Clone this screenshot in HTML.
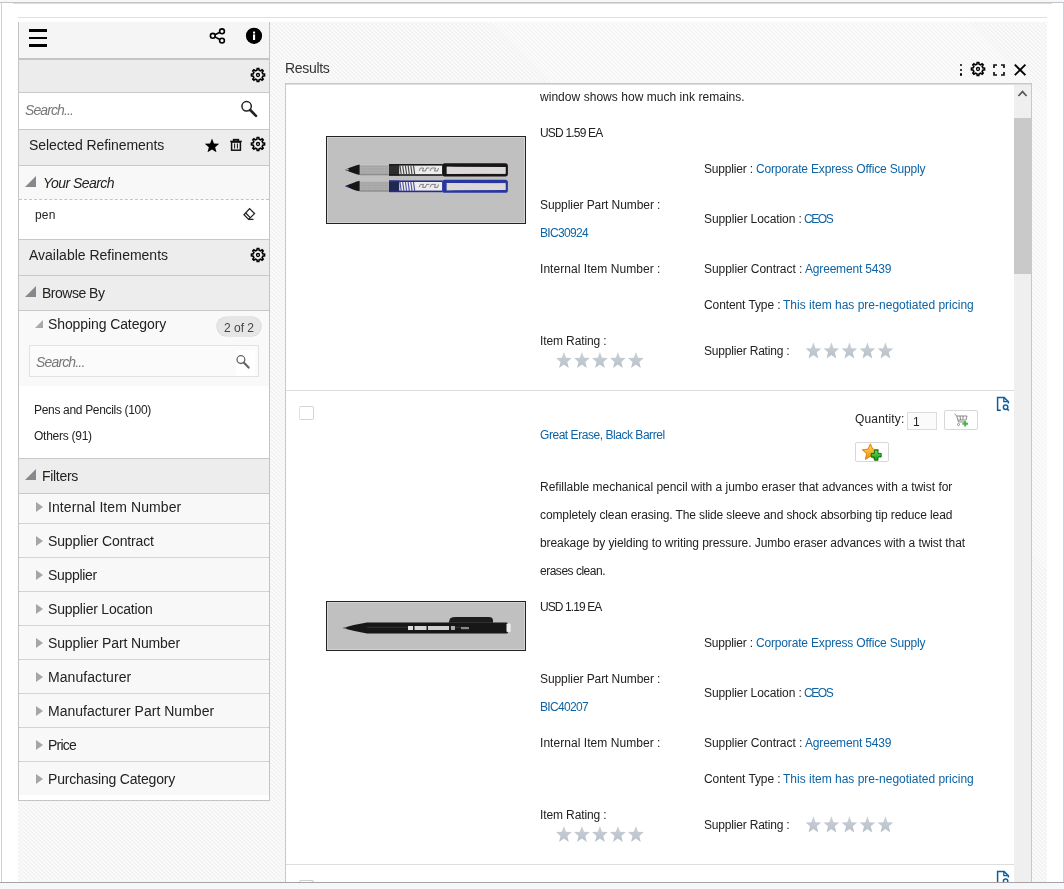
<!DOCTYPE html>
<html><head><meta charset="utf-8"><style>
html,body{margin:0;padding:0;}
body{width:1064px;height:889px;overflow:hidden;position:relative;font-family:"Liberation Sans", sans-serif;}
span{will-change:transform;}
</style></head><body>
<div style="position:absolute;left:0px;top:0px;width:1064px;height:889px;background:#f7f7f9;"></div>
<div style="position:absolute;left:0px;top:2px;width:1064px;height:1px;background:#c4c4c4;"></div>
<div style="position:absolute;left:0px;top:3px;width:1064px;height:879px;background:#ffffff;"></div>
<div style="position:absolute;left:13px;top:3px;width:1039px;height:1px;background:#d5dde5;"></div>
<div style="position:absolute;left:1px;top:3px;width:1px;height:879px;background:#c9d3dc;"></div>
<div style="position:absolute;left:1063px;top:3px;width:1px;height:879px;background:#c9d3dc;"></div>
<div style="position:absolute;left:0px;top:882px;width:1064px;height:1px;background:#a4a4a4;"></div>
<div style="position:absolute;left:18px;top:17px;width:1029px;height:1px;background:#d8e0e8;"></div>
<div style="position:absolute;left:18px;top:22px;width:1029px;height:860px;background:repeating-linear-gradient(45deg,#fafafa 0px,#fafafa 1.6px,#f3f3f3 1.6px,#f3f3f3 2.83px);"></div>
<div style="position:absolute;left:18px;top:22px;width:252px;height:779px;background:#c4c4c4;"></div>
<div style="position:absolute;left:19px;top:22px;width:250px;height:36px;background:#f5f5f5;"></div>
<div style="position:absolute;left:19px;top:58px;width:250px;height:2px;background:#c4c4c4;"></div>
<div style="position:absolute;left:19px;top:60px;width:250px;height:32px;background:#ececec;"></div>
<div style="position:absolute;left:19px;top:92px;width:250px;height:1px;background:#c8c8c8;"></div>
<div style="position:absolute;left:19px;top:93px;width:250px;height:36px;background:#ffffff;"></div>
<div style="position:absolute;left:19px;top:129px;width:250px;height:1px;background:#c8c8c8;"></div>
<div style="position:absolute;left:19px;top:130px;width:250px;height:35px;background:#ededed;"></div>
<div style="position:absolute;left:19px;top:165px;width:250px;height:1px;background:#c8c8c8;"></div>
<div style="position:absolute;left:19px;top:166px;width:250px;height:33px;background:#f8f8f8;"></div>
<div style="position:absolute;left:19px;top:199px;width:250px;height:1px;background:#ffffff;"></div>
<div style="position:absolute;left:19px;top:199px;width:250px;height:0;border-top:1px dashed #c4c4c4;"></div>
<div style="position:absolute;left:19px;top:200px;width:250px;height:39px;background:#ffffff;"></div>
<div style="position:absolute;left:19px;top:239px;width:250px;height:1px;background:#c8c8c8;"></div>
<div style="position:absolute;left:19px;top:240px;width:250px;height:35px;background:#ededed;"></div>
<div style="position:absolute;left:19px;top:275px;width:250px;height:1px;background:#c8c8c8;"></div>
<div style="position:absolute;left:19px;top:276px;width:250px;height:34px;background:#ededed;"></div>
<div style="position:absolute;left:19px;top:310px;width:250px;height:1px;background:#c8c8c8;"></div>
<div style="position:absolute;left:19px;top:311px;width:250px;height:75px;background:#f9f9f9;"></div>
<div style="position:absolute;left:19px;top:386px;width:250px;height:72px;background:#ffffff;"></div>
<div style="position:absolute;left:19px;top:458px;width:250px;height:1px;background:#c8c8c8;"></div>
<div style="position:absolute;left:19px;top:459px;width:250px;height:34px;background:#ededed;"></div>
<div style="position:absolute;left:19px;top:493px;width:250px;height:1px;background:#c8c8c8;"></div>
<div style="position:absolute;left:19px;top:494px;width:250px;height:29px;background:#f8f8f8;"></div>
<div style="position:absolute;left:20px;top:523px;width:248px;height:1px;background:#d4d4d4;"></div>
<div style="position:absolute;left:36px;top:502px;width:0;height:0;border-top:5px solid transparent;border-bottom:5px solid transparent;border-left:7px solid #a6a6a6;"></div>
<div style="position:absolute;left:19px;top:524px;width:250px;height:33px;background:#f8f8f8;"></div>
<div style="position:absolute;left:20px;top:557px;width:248px;height:1px;background:#d4d4d4;"></div>
<div style="position:absolute;left:36px;top:536px;width:0;height:0;border-top:5px solid transparent;border-bottom:5px solid transparent;border-left:7px solid #a6a6a6;"></div>
<div style="position:absolute;left:19px;top:558px;width:250px;height:33px;background:#f8f8f8;"></div>
<div style="position:absolute;left:20px;top:591px;width:248px;height:1px;background:#d4d4d4;"></div>
<div style="position:absolute;left:36px;top:570px;width:0;height:0;border-top:5px solid transparent;border-bottom:5px solid transparent;border-left:7px solid #a6a6a6;"></div>
<div style="position:absolute;left:19px;top:592px;width:250px;height:33px;background:#f8f8f8;"></div>
<div style="position:absolute;left:20px;top:625px;width:248px;height:1px;background:#d4d4d4;"></div>
<div style="position:absolute;left:36px;top:604px;width:0;height:0;border-top:5px solid transparent;border-bottom:5px solid transparent;border-left:7px solid #a6a6a6;"></div>
<div style="position:absolute;left:19px;top:626px;width:250px;height:33px;background:#f8f8f8;"></div>
<div style="position:absolute;left:20px;top:659px;width:248px;height:1px;background:#d4d4d4;"></div>
<div style="position:absolute;left:36px;top:638px;width:0;height:0;border-top:5px solid transparent;border-bottom:5px solid transparent;border-left:7px solid #a6a6a6;"></div>
<div style="position:absolute;left:19px;top:660px;width:250px;height:33px;background:#f8f8f8;"></div>
<div style="position:absolute;left:20px;top:693px;width:248px;height:1px;background:#d4d4d4;"></div>
<div style="position:absolute;left:36px;top:672px;width:0;height:0;border-top:5px solid transparent;border-bottom:5px solid transparent;border-left:7px solid #a6a6a6;"></div>
<div style="position:absolute;left:19px;top:694px;width:250px;height:33px;background:#f8f8f8;"></div>
<div style="position:absolute;left:20px;top:727px;width:248px;height:1px;background:#d4d4d4;"></div>
<div style="position:absolute;left:36px;top:706px;width:0;height:0;border-top:5px solid transparent;border-bottom:5px solid transparent;border-left:7px solid #a6a6a6;"></div>
<div style="position:absolute;left:19px;top:728px;width:250px;height:33px;background:#f8f8f8;"></div>
<div style="position:absolute;left:20px;top:761px;width:248px;height:1px;background:#d4d4d4;"></div>
<div style="position:absolute;left:36px;top:740px;width:0;height:0;border-top:5px solid transparent;border-bottom:5px solid transparent;border-left:7px solid #a6a6a6;"></div>
<div style="position:absolute;left:19px;top:762px;width:250px;height:33px;background:#f8f8f8;"></div>
<div style="position:absolute;left:36px;top:774px;width:0;height:0;border-top:5px solid transparent;border-bottom:5px solid transparent;border-left:7px solid #a6a6a6;"></div>
<div style="position:absolute;left:19px;top:795px;width:250px;height:5px;background:#ffffff;"></div>
<div style="position:absolute;left:29px;top:345px;width:228px;height:30px;border:1px solid #e2e2e2;background:#fbfbfb;"></div>
<div style="position:absolute;left:236px;top:350px;width:19px;height:26px;background:#ffffff;"></div>
<div style="position:absolute;left:217px;top:317px;width:44px;height:19px;border-radius:10px;background:#e6e6e6;box-shadow:0 0 0.5px 0.6px #d4d4d4;"></div>
<div style="position:absolute;left:25px;top:176px;width:0;height:0;border-left:11px solid transparent;border-bottom:11px solid #85898d;"></div>
<div style="position:absolute;left:25px;top:286px;width:0;height:0;border-left:11px solid transparent;border-bottom:11px solid #85898d;"></div>
<div style="position:absolute;left:25px;top:469px;width:0;height:0;border-left:11px solid transparent;border-bottom:11px solid #85898d;"></div>
<div style="position:absolute;left:35px;top:320px;width:0;height:0;border-left:8px solid transparent;border-bottom:8px solid #a9a9a9;"></div>
<div style="position:absolute;left:29px;top:29px;width:18px;height:3px;background:#000;"></div>
<div style="position:absolute;left:29px;top:37px;width:18px;height:2px;background:#000;"></div>
<div style="position:absolute;left:29px;top:44px;width:18px;height:3px;background:#000;"></div>
<svg style="position:absolute;left:205px;top:26px" width="24" height="20" viewBox="205 26 24 20"><g fill="none" stroke="#000" stroke-width="1.6"><circle cx="212.8" cy="35.8" r="2.4"/><circle cx="222" cy="31.3" r="2.4"/><circle cx="222" cy="40.6" r="2.4"/><line x1="214.9" y1="34.7" x2="219.9" y2="32.3"/><line x1="214.9" y1="36.9" x2="219.9" y2="39.5"/></g></svg>
<svg style="position:absolute;left:244px;top:26px" width="20" height="20" viewBox="244 26 20 20"><circle cx="254" cy="35.8" r="8.1" fill="#000"/><rect x="253" y="31.6" width="2.1" height="1.9" fill="#fff"/><rect x="253" y="34.4" width="2.1" height="5.6" fill="#fff"/></svg>
<svg style="position:absolute;left:247.50px;top:65.30px" width="20" height="20" viewBox="247.50 65.30 20 20"><path d="M256.72,68.75 L258.28,68.75 L258.61,70.53 L260.09,71.14 L261.59,70.12 L262.68,71.21 L261.66,72.71 L262.27,74.19 L264.05,74.52 L264.05,76.08 L262.27,76.41 L261.66,77.89 L262.68,79.39 L261.59,80.48 L260.09,79.46 L258.61,80.07 L258.28,81.85 L256.72,81.85 L256.39,80.07 L254.91,79.46 L253.41,80.48 L252.32,79.39 L253.34,77.89 L252.73,76.41 L250.95,76.08 L250.95,74.52 L252.73,74.19 L253.34,72.71 L252.32,71.21 L253.41,70.12 L254.91,71.14 L256.39,70.53 Z" fill="none" stroke="#000" stroke-width="1.6" stroke-linejoin="miter"/><circle cx="257.5" cy="75.3" r="1.5" fill="none" stroke="#000" stroke-width="1.3"/></svg>
<svg style="position:absolute;left:247.50px;top:134.30px" width="20" height="20" viewBox="247.50 134.30 20 20"><path d="M256.72,137.75 L258.28,137.75 L258.61,139.53 L260.09,140.14 L261.59,139.12 L262.68,140.21 L261.66,141.71 L262.27,143.19 L264.05,143.52 L264.05,145.08 L262.27,145.41 L261.66,146.89 L262.68,148.39 L261.59,149.48 L260.09,148.46 L258.61,149.07 L258.28,150.85 L256.72,150.85 L256.39,149.07 L254.91,148.46 L253.41,149.48 L252.32,148.39 L253.34,146.89 L252.73,145.41 L250.95,145.08 L250.95,143.52 L252.73,143.19 L253.34,141.71 L252.32,140.21 L253.41,139.12 L254.91,140.14 L256.39,139.53 Z" fill="none" stroke="#000" stroke-width="1.6" stroke-linejoin="miter"/><circle cx="257.5" cy="144.3" r="1.5" fill="none" stroke="#000" stroke-width="1.3"/></svg>
<svg style="position:absolute;left:247.50px;top:244.60px" width="20" height="20" viewBox="247.50 244.60 20 20"><path d="M256.72,248.05 L258.28,248.05 L258.61,249.83 L260.09,250.44 L261.59,249.42 L262.68,250.51 L261.66,252.01 L262.27,253.49 L264.05,253.82 L264.05,255.38 L262.27,255.71 L261.66,257.19 L262.68,258.69 L261.59,259.78 L260.09,258.76 L258.61,259.37 L258.28,261.15 L256.72,261.15 L256.39,259.37 L254.91,258.76 L253.41,259.78 L252.32,258.69 L253.34,257.19 L252.73,255.71 L250.95,255.38 L250.95,253.82 L252.73,253.49 L253.34,252.01 L252.32,250.51 L253.41,249.42 L254.91,250.44 L256.39,249.83 Z" fill="none" stroke="#000" stroke-width="1.6" stroke-linejoin="miter"/><circle cx="257.5" cy="254.6" r="1.5" fill="none" stroke="#000" stroke-width="1.3"/></svg>
<svg style="position:absolute;left:200px;top:134px" width="24" height="22" viewBox="200 134 24 22"><path d="M212.00,138.60 L213.94,143.53 L219.23,143.85 L215.14,147.22 L216.47,152.35 L212.00,149.50 L207.53,152.35 L208.86,147.22 L204.77,143.85 L210.06,143.53 Z" fill="#000"/></svg>
<svg style="position:absolute;left:228px;top:136px" width="16" height="18" viewBox="228 136 16 18"><g fill="none" stroke="#111" stroke-width="1.5"><rect x="231.6" y="142" width="8.8" height="8.2"/><line x1="230.2" y1="141.4" x2="241.8" y2="141.4"/><rect x="233.6" y="139.6" width="4.8" height="1.8"/><line x1="234.6" y1="143.5" x2="234.6" y2="148.5" stroke-width="1"/><line x1="237.4" y1="143.5" x2="237.4" y2="148.5" stroke-width="1"/></g></svg>
<svg style="position:absolute;left:236px;top:96px" width="24" height="24" viewBox="236 96 24 24"><circle cx="246.6" cy="106.3" r="4.7" fill="none" stroke="#222" stroke-width="1.5"/><line x1="250.2" y1="110" x2="256" y2="115.8" stroke="#222" stroke-width="2.6" stroke-linecap="round"/></svg>
<svg style="position:absolute;left:234px;top:352px" width="18" height="20" viewBox="234 352 18 20"><circle cx="240.9" cy="359.6" r="3.9" fill="none" stroke="#666" stroke-width="1.3"/><line x1="243.8" y1="362.6" x2="248.6" y2="367.6" stroke="#666" stroke-width="2.2" stroke-linecap="round"/></svg>
<svg style="position:absolute;left:240px;top:205px" width="18" height="18" viewBox="240 205 18 18"><g fill="none" stroke="#222" stroke-width="1.3"><path d="M249.6,208.6 L254.5,213.6 L248.6,219.4 L244,214.8 Z"/><line x1="245.8" y1="213.0" x2="250.2" y2="217.6"/><line x1="248.6" y1="219.4" x2="253.5" y2="219.4"/></g></svg>
<div style="position:absolute;left:959.7px;top:63.7px;width:2.6px;height:2.6px;border-radius:50%;background:#000"></div>
<div style="position:absolute;left:959.7px;top:68.5px;width:2.6px;height:2.6px;border-radius:50%;background:#000"></div>
<div style="position:absolute;left:959.7px;top:73.3px;width:2.6px;height:2.6px;border-radius:50%;background:#000"></div>
<svg style="position:absolute;left:968.40px;top:59.40px" width="20" height="20" viewBox="968.40 59.40 20 20"><path d="M977.62,62.85 L979.18,62.85 L979.51,64.63 L980.99,65.24 L982.49,64.22 L983.58,65.31 L982.56,66.81 L983.17,68.29 L984.95,68.62 L984.95,70.18 L983.17,70.51 L982.56,71.99 L983.58,73.49 L982.49,74.58 L980.99,73.56 L979.51,74.17 L979.18,75.95 L977.62,75.95 L977.29,74.17 L975.81,73.56 L974.31,74.58 L973.22,73.49 L974.24,71.99 L973.63,70.51 L971.85,70.18 L971.85,68.62 L973.63,68.29 L974.24,66.81 L973.22,65.31 L974.31,64.22 L975.81,65.24 L977.29,64.63 Z" fill="none" stroke="#000" stroke-width="1.6" stroke-linejoin="miter"/><circle cx="978.4" cy="69.4" r="1.5" fill="none" stroke="#000" stroke-width="1.3"/></svg>
<svg style="position:absolute;left:990px;top:61px" width="18" height="18" viewBox="990 61 18 18"><g fill="none" stroke="#111" stroke-width="1.7"><path d="M994,68 V65 H997"/><path d="M1001,65 H1004 V68"/><path d="M1004,72 V75 H1001"/><path d="M997,75 H994 V72"/></g></svg>
<svg style="position:absolute;left:1011px;top:61px" width="18" height="18" viewBox="1011 61 18 18"><g stroke="#000" stroke-width="1.9"><line x1="1014.8" y1="64.6" x2="1025.4" y2="75.2"/><line x1="1025.4" y1="64.6" x2="1014.8" y2="75.2"/></g></svg>
<div style="position:absolute;left:285px;top:83px;width:747px;height:799px;background:#c8c8c8;"></div>
<div style="position:absolute;left:286px;top:84px;width:745px;height:798px;background:#dedede;"></div>
<div style="position:absolute;left:286px;top:85px;width:728px;height:797px;background:#ffffff;"></div>
<div style="position:absolute;left:1014px;top:85px;width:17px;height:797px;background:#efefef;"></div>
<div style="position:absolute;left:1014px;top:118px;width:17px;height:156px;background:#c9c9c9;"></div>
<svg style="position:absolute;left:1014px;top:86px" width="17" height="14" viewBox="1014 86 17 14"><path d="M1018.4,96 L1022.5,91.6 L1026.6,96" fill="none" stroke="#5a5a5a" stroke-width="1.8"/></svg>
<div style="position:absolute;left:286px;top:390px;width:728px;height:1px;background:#dddddd;"></div>
<div style="position:absolute;left:299px;top:406px;width:13px;height:12px;border:1px solid #d2d4d6;border-left-color:#e2e2e2;border-radius:2px;background:#fff"></div>
<svg style="position:absolute;left:994px;top:394px" width="18" height="20" viewBox="994 394 18 20"><g fill="none" stroke="#0b5f9f" stroke-width="1.5"><path d="M1000.8,410.2 H997.6 V397.6 H1004.2 L1008.4,401.8 V403.4"/><path d="M1003.8,397.8 V401.6 H1007.8" stroke-width="1.3"/><circle cx="1005.6" cy="407.3" r="2.2"/><line x1="1007.2" y1="409" x2="1008.8" y2="410.6"/></g></svg>
<div style="position:absolute;left:286px;top:864px;width:728px;height:1px;background:#dddddd;"></div>
<div style="position:absolute;left:299px;top:880px;width:13px;height:12px;border:1px solid #d2d4d6;border-left-color:#e2e2e2;border-radius:2px;background:#fff"></div>
<svg style="position:absolute;left:994px;top:868px" width="18" height="20" viewBox="994 868 18 20"><g fill="none" stroke="#0b5f9f" stroke-width="1.5"><path d="M1000.8,884.2 H997.6 V871.6 H1004.2 L1008.4,875.8 V877.4"/><path d="M1003.8,871.8 V875.6 H1007.8" stroke-width="1.3"/><circle cx="1005.6" cy="881.3" r="2.2"/><line x1="1007.2" y1="883" x2="1008.8" y2="884.6"/></g></svg>
<div style="position:absolute;left:286px;top:-84px;width:728px;height:1px;background:#dddddd;"></div>
<div style="position:absolute;left:299px;top:-68px;width:13px;height:12px;border:1px solid #d2d4d6;border-left-color:#e2e2e2;border-radius:2px;background:#fff"></div>
<svg style="position:absolute;left:994px;top:-80px" width="18" height="20" viewBox="994 -80 18 20"><g fill="none" stroke="#0b5f9f" stroke-width="1.5"><path d="M1000.8,-63.80000000000001 H997.6 V-76.39999999999998 H1004.2 L1008.4,-72.19999999999999 V-70.60000000000002"/><path d="M1003.8,-76.19999999999999 V-72.39999999999998 H1007.8" stroke-width="1.3"/><circle cx="1005.6" cy="-66.69999999999999" r="2.2"/><line x1="1007.2" y1="-65" x2="1008.8" y2="-63.39999999999998"/></g></svg>
<svg style="position:absolute;left:550px;top:336px" width="360" height="40" viewBox="550 336 360 40"><defs><linearGradient id="sg0" x1="0" y1="0" x2="0" y2="1"><stop offset="0" stop-color="#ccd1d7"/><stop offset="1" stop-color="#b8c0c9"/></linearGradient></defs><path d="M563.90,351.90 L565.98,357.73 L571.77,358.05 L567.26,361.97 L568.77,368.00 L563.90,364.60 L559.03,368.00 L560.54,361.97 L556.03,358.05 L561.82,357.73 Z" fill="url(#sg0)"/><path d="M581.90,351.90 L583.98,357.73 L589.77,358.05 L585.26,361.97 L586.77,368.00 L581.90,364.60 L577.03,368.00 L578.54,361.97 L574.03,358.05 L579.82,357.73 Z" fill="url(#sg0)"/><path d="M599.90,351.90 L601.98,357.73 L607.77,358.05 L603.26,361.97 L604.77,368.00 L599.90,364.60 L595.03,368.00 L596.54,361.97 L592.03,358.05 L597.82,357.73 Z" fill="url(#sg0)"/><path d="M617.90,351.90 L619.98,357.73 L625.77,358.05 L621.26,361.97 L622.77,368.00 L617.90,364.60 L613.03,368.00 L614.54,361.97 L610.03,358.05 L615.82,357.73 Z" fill="url(#sg0)"/><path d="M635.90,351.90 L637.98,357.73 L643.77,358.05 L639.26,361.97 L640.77,368.00 L635.90,364.60 L631.03,368.00 L632.54,361.97 L628.03,358.05 L633.82,357.73 Z" fill="url(#sg0)"/><path d="M813.40,342.30 L815.48,348.13 L821.27,348.45 L816.76,352.37 L818.27,358.40 L813.40,355.00 L808.53,358.40 L810.04,352.37 L805.53,348.45 L811.32,348.13 Z" fill="url(#sg0)"/><path d="M831.40,342.30 L833.48,348.13 L839.27,348.45 L834.76,352.37 L836.27,358.40 L831.40,355.00 L826.53,358.40 L828.04,352.37 L823.53,348.45 L829.32,348.13 Z" fill="url(#sg0)"/><path d="M849.40,342.30 L851.48,348.13 L857.27,348.45 L852.76,352.37 L854.27,358.40 L849.40,355.00 L844.53,358.40 L846.04,352.37 L841.53,348.45 L847.32,348.13 Z" fill="url(#sg0)"/><path d="M867.40,342.30 L869.48,348.13 L875.27,348.45 L870.76,352.37 L872.27,358.40 L867.40,355.00 L862.53,358.40 L864.04,352.37 L859.53,348.45 L865.32,348.13 Z" fill="url(#sg0)"/><path d="M885.40,342.30 L887.48,348.13 L893.27,348.45 L888.76,352.37 L890.27,358.40 L885.40,355.00 L880.53,358.40 L882.04,352.37 L877.53,348.45 L883.32,348.13 Z" fill="url(#sg0)"/></svg>
<svg style="position:absolute;left:550px;top:810px" width="360" height="40" viewBox="550 810 360 40"><defs><linearGradient id="sg474" x1="0" y1="0" x2="0" y2="1"><stop offset="0" stop-color="#ccd1d7"/><stop offset="1" stop-color="#b8c0c9"/></linearGradient></defs><path d="M563.90,825.90 L565.98,831.73 L571.77,832.05 L567.26,835.97 L568.77,842.00 L563.90,838.60 L559.03,842.00 L560.54,835.97 L556.03,832.05 L561.82,831.73 Z" fill="url(#sg474)"/><path d="M581.90,825.90 L583.98,831.73 L589.77,832.05 L585.26,835.97 L586.77,842.00 L581.90,838.60 L577.03,842.00 L578.54,835.97 L574.03,832.05 L579.82,831.73 Z" fill="url(#sg474)"/><path d="M599.90,825.90 L601.98,831.73 L607.77,832.05 L603.26,835.97 L604.77,842.00 L599.90,838.60 L595.03,842.00 L596.54,835.97 L592.03,832.05 L597.82,831.73 Z" fill="url(#sg474)"/><path d="M617.90,825.90 L619.98,831.73 L625.77,832.05 L621.26,835.97 L622.77,842.00 L617.90,838.60 L613.03,842.00 L614.54,835.97 L610.03,832.05 L615.82,831.73 Z" fill="url(#sg474)"/><path d="M635.90,825.90 L637.98,831.73 L643.77,832.05 L639.26,835.97 L640.77,842.00 L635.90,838.60 L631.03,842.00 L632.54,835.97 L628.03,832.05 L633.82,831.73 Z" fill="url(#sg474)"/><path d="M813.40,816.30 L815.48,822.13 L821.27,822.45 L816.76,826.37 L818.27,832.40 L813.40,829.00 L808.53,832.40 L810.04,826.37 L805.53,822.45 L811.32,822.13 Z" fill="url(#sg474)"/><path d="M831.40,816.30 L833.48,822.13 L839.27,822.45 L834.76,826.37 L836.27,832.40 L831.40,829.00 L826.53,832.40 L828.04,826.37 L823.53,822.45 L829.32,822.13 Z" fill="url(#sg474)"/><path d="M849.40,816.30 L851.48,822.13 L857.27,822.45 L852.76,826.37 L854.27,832.40 L849.40,829.00 L844.53,832.40 L846.04,826.37 L841.53,822.45 L847.32,822.13 Z" fill="url(#sg474)"/><path d="M867.40,816.30 L869.48,822.13 L875.27,822.45 L870.76,826.37 L872.27,832.40 L867.40,829.00 L862.53,832.40 L864.04,826.37 L859.53,822.45 L865.32,822.13 Z" fill="url(#sg474)"/><path d="M885.40,816.30 L887.48,822.13 L893.27,822.45 L888.76,826.37 L890.27,832.40 L885.40,829.00 L880.53,832.40 L882.04,826.37 L877.53,822.45 L883.32,822.13 Z" fill="url(#sg474)"/></svg>
<svg style="position:absolute;left:326px;top:136px" width="200" height="88" viewBox="0 0 200 88">
<rect x="0.5" y="0.5" width="199" height="87" fill="#c0c0c0" stroke="#222" stroke-width="1"/>
<rect x="1.5" y="1.5" width="197" height="85" fill="none" stroke="#d4d4d4" stroke-width="1"/>
<g transform="translate(0,0)"><path d="M19.2,33.7 Q24,31.6 27,30.6 Q31,29 33.8,28.4 L33.8,38.9 Q31,38.4 27,37 Q24,35.9 19.2,33.9 Z" fill="#161616"/><path d="M19,33.8 L22.5,33 L22.5,34.6 Z" fill="#ddd"/><rect x="33.8" y="27.9" width="29.2" height="11.3" fill="#acacac"/><rect x="33.8" y="27.9" width="29.2" height="1.3" fill="#c6c6c6"/><rect x="33.8" y="37.8" width="29.2" height="1.4" fill="#8e8e8e"/><line x1="35" y1="30.5" x2="62" y2="30.5" stroke="#9a9a9a" stroke-width="0.7" stroke-dasharray="1.2 1.2"/><line x1="35" y1="33" x2="62" y2="33" stroke="#9a9a9a" stroke-width="0.7" stroke-dasharray="1.2 1.2"/><line x1="35" y1="35.5" x2="62" y2="35.5" stroke="#9a9a9a" stroke-width="0.7" stroke-dasharray="1.2 1.2"/><rect x="63" y="28.2" width="53.5" height="11.2" fill="#ededed"/><rect x="63" y="28.2" width="10.2" height="11.2" fill="#2e2e2e"/><rect x="63" y="28" width="53.5" height="1.6" fill="#1a1a1a"/><rect x="63" y="38.2" width="53.5" height="1.6" fill="#1a1a1a"/><path d="M74.0,29.6 L75.2,38.2" stroke="#1a1a1a" stroke-width="1.1" opacity="0.8"/><path d="M76.7,29.6 L77.9,38.2" stroke="#1a1a1a" stroke-width="1.1" opacity="0.8"/><path d="M79.4,29.6 L80.6,38.2" stroke="#1a1a1a" stroke-width="1.1" opacity="0.8"/><path d="M82.1,29.6 L83.3,38.2" stroke="#1a1a1a" stroke-width="1.1" opacity="0.8"/><path d="M84.8,29.6 L86.0,38.2" stroke="#1a1a1a" stroke-width="1.1" opacity="0.8"/><path d="M87.5,29.6 L88.7,38.2" stroke="#1a1a1a" stroke-width="1.1" opacity="0.8"/><path d="M93,35 l1.5,-3 h3 l-1,3 h3 l1,-3 h3 M104,35 l1.5,-3 h4 l-1,3 h3 l1,-3" fill="none" stroke="#444" stroke-width="0.8" opacity="0.8"/><rect x="116.1" y="27.3" width="65.8" height="13.1" rx="2.6" fill="#161616"/><path d="M120.8,30.7 L179.5,30.9 L179.5,37.7 L120.8,37.9 Q150,36.4 120.8,37.9 Z" fill="#dcd8d8"/><path d="M120.8,30.7 Q150,32 179.5,30.9 L179.5,37.7 Q150,36.6 120.8,37.9 Z" fill="#dcd8d8"/></g>
<g transform="translate(0,16.4)"><path d="M19.2,33.7 Q24,31.6 27,30.6 Q31,29 33.8,28.4 L33.8,38.9 Q31,38.4 27,37 Q24,35.9 19.2,33.9 Z" fill="#161616"/><path d="M19,33.8 L22.5,33 L22.5,34.6 Z" fill="#2a3ab0"/><rect x="33.8" y="27.9" width="29.2" height="11.3" fill="#acacac"/><rect x="33.8" y="27.9" width="29.2" height="1.3" fill="#c6c6c6"/><rect x="33.8" y="37.8" width="29.2" height="1.4" fill="#8e8e8e"/><line x1="35" y1="30.5" x2="62" y2="30.5" stroke="#9a9a9a" stroke-width="0.7" stroke-dasharray="1.2 1.2"/><line x1="35" y1="33" x2="62" y2="33" stroke="#9a9a9a" stroke-width="0.7" stroke-dasharray="1.2 1.2"/><line x1="35" y1="35.5" x2="62" y2="35.5" stroke="#9a9a9a" stroke-width="0.7" stroke-dasharray="1.2 1.2"/><rect x="63" y="28.2" width="53.5" height="11.2" fill="#ededed"/><rect x="63" y="28.2" width="10.2" height="11.2" fill="#1e2850"/><rect x="63" y="28" width="53.5" height="1.6" fill="#2a2a8c"/><rect x="63" y="38.2" width="53.5" height="1.6" fill="#2a2a8c"/><path d="M74.0,29.6 L75.2,38.2" stroke="#2a2a8c" stroke-width="1.1" opacity="0.8"/><path d="M76.7,29.6 L77.9,38.2" stroke="#2a2a8c" stroke-width="1.1" opacity="0.8"/><path d="M79.4,29.6 L80.6,38.2" stroke="#2a2a8c" stroke-width="1.1" opacity="0.8"/><path d="M82.1,29.6 L83.3,38.2" stroke="#2a2a8c" stroke-width="1.1" opacity="0.8"/><path d="M84.8,29.6 L86.0,38.2" stroke="#2a2a8c" stroke-width="1.1" opacity="0.8"/><path d="M87.5,29.6 L88.7,38.2" stroke="#2a2a8c" stroke-width="1.1" opacity="0.8"/><path d="M93,35 l1.5,-3 h3 l-1,3 h3 l1,-3 h3 M104,35 l1.5,-3 h4 l-1,3 h3 l1,-3" fill="none" stroke="#444" stroke-width="0.8" opacity="0.8"/><rect x="116.1" y="27.3" width="65.8" height="13.1" rx="2.6" fill="#2a36a0"/><path d="M120.8,30.7 L179.5,30.9 L179.5,37.7 L120.8,37.9 Q150,36.4 120.8,37.9 Z" fill="#dcd8d8"/><path d="M120.8,30.7 Q150,32 179.5,30.9 L179.5,37.7 Q150,36.6 120.8,37.9 Z" fill="#dcd8d8"/></g>
</svg>
<svg style="position:absolute;left:326px;top:601px" width="200" height="50" viewBox="0 0 200 50">
<rect x="0.5" y="0.5" width="199" height="49" fill="#c0c0c0" stroke="#222" stroke-width="1"/>
<rect x="1.5" y="1.5" width="197" height="47" fill="none" stroke="#d4d4d4" stroke-width="1"/>
<path d="M16,26.9 L20.5,26.2 L20.5,27.7 Z" fill="#333"/>
<path d="M20.3,25.9 Q30,23.5 41,21.6 L180.5,21.6 Q182,21.6 182,23.5 L182,31 Q182,32.6 180.5,32.6 L41,32.6 Q30,30.6 20.3,28 Z" fill="#171717"/>
<rect x="41" y="25.8" width="100" height="0.9" fill="#3a3a3a"/>
<path d="M122.7,21.7 L124,17.4 Q126,16 130,16 L163,16 Q166.5,16.2 167,19 L167,21.7 Z" fill="#1c1c1c"/>
<rect x="180.5" y="22.6" width="4.2" height="8.4" rx="1" fill="#ececec"/>
<rect x="82" y="25" width="5" height="4" fill="#e0e0e0"/>
<rect x="88.5" y="25" width="12" height="4" fill="#d6d6d6"/>
<rect x="102" y="25" width="21" height="4" fill="#d0d0d0"/>
<rect x="125" y="25" width="4" height="4" fill="#aaa"/>
<rect x="135" y="26" width="8" height="2.2" fill="#888"/>
</svg>
<div style="position:absolute;left:907px;top:412px;width:28px;height:16px;border:1px solid #dcdcdc;background:#fbfbfb"></div>
<div style="position:absolute;left:944px;top:410px;width:32px;height:18px;border:1px solid #d8d8d8;border-radius:2px;background:#fff"></div>
<svg style="position:absolute;left:950px;top:411px" width="22" height="16" viewBox="950 411 22 16"><g fill="none" stroke="#888" stroke-width="1"><path d="M954.5,414 L956.5,415.5 L958.5,422 L965,422"/><path d="M957,416 L967,416 L966,420 L958,420"/><line x1="960" y1="416" x2="960.6" y2="420"/><line x1="963" y1="416" x2="963" y2="420"/></g><circle cx="958.5" cy="424.5" r="1" fill="none" stroke="#777" stroke-width="0.8"/><path d="M964.2,421 h2 v1.8 h1.8 v2 h-1.8 v1.8 h-2 v-1.8 h-1.8 v-2 h1.8 Z" fill="#46b846"/></svg>
<div style="position:absolute;left:855px;top:442px;width:32px;height:18px;border:1px solid #d8d8d8;border-radius:2px;background:#fff"></div>
<svg style="position:absolute;left:858px;top:440px" width="26" height="24" viewBox="858 440 26 24"><defs><linearGradient id="og" x1="0" y1="0" x2="0" y2="1"><stop offset="0" stop-color="#ffd84a"/><stop offset="1" stop-color="#f09010"/></linearGradient><linearGradient id="gg" x1="0" y1="0" x2="0" y2="1"><stop offset="0" stop-color="#5ee05e"/><stop offset="1" stop-color="#10a010"/></linearGradient></defs><path d="M870.40,443.80 L872.75,449.16 L878.58,449.74 L874.20,453.64 L875.45,459.36 L870.40,456.40 L865.35,459.36 L866.60,453.64 L862.22,449.74 L868.05,449.16 Z" fill="url(#og)" stroke="#d87a08" stroke-width="0.9" stroke-linejoin="round"/><path d="M874.4,450.2 h3.6 v3.2 h3.2 v3.6 h-3.2 v3.2 h-3.6 v-3.2 h-3.2 v-3.6 h3.2 Z" fill="url(#gg)" stroke="#0a600a" stroke-width="0.9" stroke-linejoin="round"/></svg>
<div style="position:absolute;left:299px;top:880px;width:14px;height:2px;overflow:hidden"><div style="width:12px;height:12px;border:1px solid #cfcfcf;border-radius:2px;background:#fff"></div></div>
<div style="position:absolute;left:0px;top:882px;width:1064px;height:1px;background:#a4a4a4;"></div>
<div style="position:absolute;left:0px;top:883px;width:1064px;height:6px;background:#f7f7f9;"></div>
<span id="f0" style="position:absolute;left:48px;top:500px;font-size:14px;line-height:14px;color:#222222;font-style:normal;white-space:nowrap;letter-spacing:0.089px;">Internal Item Number</span>
<span id="f1" style="position:absolute;left:48px;top:534px;font-size:14px;line-height:14px;color:#222222;font-style:normal;white-space:nowrap;letter-spacing:-0.136px;">Supplier Contract</span>
<span id="f2" style="position:absolute;left:48px;top:568px;font-size:14px;line-height:14px;color:#222222;font-style:normal;white-space:nowrap;letter-spacing:-0.311px;">Supplier</span>
<span id="f3" style="position:absolute;left:48px;top:602px;font-size:14px;line-height:14px;color:#222222;font-style:normal;white-space:nowrap;letter-spacing:-0.212px;">Supplier Location</span>
<span id="f4" style="position:absolute;left:48px;top:636px;font-size:14px;line-height:14px;color:#222222;font-style:normal;white-space:nowrap;letter-spacing:-0.133px;">Supplier Part Number</span>
<span id="f5" style="position:absolute;left:48px;top:670px;font-size:14px;line-height:14px;color:#222222;font-style:normal;white-space:nowrap;letter-spacing:0.065px;">Manufacturer</span>
<span id="f6" style="position:absolute;left:48px;top:704px;font-size:14px;line-height:14px;color:#222222;font-style:normal;white-space:nowrap;letter-spacing:0.016px;">Manufacturer Part Number</span>
<span id="f7" style="position:absolute;left:48px;top:738px;font-size:14px;line-height:14px;color:#222222;font-style:normal;white-space:nowrap;letter-spacing:-0.752px;">Price</span>
<span id="f8" style="position:absolute;left:48px;top:772px;font-size:14px;line-height:14px;color:#222222;font-style:normal;white-space:nowrap;letter-spacing:-0.192px;">Purchasing Category</span>
<span id="srch1" style="position:absolute;left:25px;top:103px;font-size:14px;line-height:14px;color:#777777;font-style:italic;white-space:nowrap;letter-spacing:-0.891px;">Search...</span>
<span id="selref" style="position:absolute;left:29px;top:138px;font-size:14px;line-height:14px;color:#222222;font-style:normal;white-space:nowrap;letter-spacing:-0.093px;">Selected Refinements</span>
<span id="yoursearch" style="position:absolute;left:43px;top:176px;font-size:14px;line-height:14px;color:#222222;font-style:italic;white-space:nowrap;letter-spacing:-0.546px;">Your Search</span>
<span id="pen" style="position:absolute;left:35px;top:209px;font-size:12px;line-height:12px;color:#222222;font-style:normal;white-space:nowrap;letter-spacing:0.184px;">pen</span>
<span id="avail" style="position:absolute;left:29px;top:248px;font-size:14px;line-height:14px;color:#222222;font-style:normal;white-space:nowrap;">Available Refinements</span>
<span id="browse" style="position:absolute;left:42px;top:286px;font-size:14px;line-height:14px;color:#222222;font-style:normal;white-space:nowrap;letter-spacing:-0.503px;">Browse By</span>
<span id="shopcat" style="position:absolute;left:48px;top:317px;font-size:14px;line-height:14px;color:#222222;font-style:normal;white-space:nowrap;letter-spacing:-0.098px;">Shopping Category</span>
<span id="badge" style="position:absolute;left:224px;top:322px;font-size:12px;line-height:12px;color:#444444;font-style:normal;white-space:nowrap;">2 of 2</span>
<span id="srch2" style="position:absolute;left:36px;top:355px;font-size:14px;line-height:14px;color:#777777;font-style:italic;white-space:nowrap;letter-spacing:-0.841px;">Search...</span>
<span id="pens" style="position:absolute;left:34px;top:404px;font-size:12px;line-height:12px;color:#222222;font-style:normal;white-space:nowrap;letter-spacing:-0.323px;">Pens and Pencils (100)</span>
<span id="others" style="position:absolute;left:34px;top:430px;font-size:12px;line-height:12px;color:#222222;font-style:normal;white-space:nowrap;letter-spacing:-0.259px;">Others (91)</span>
<span id="filters" style="position:absolute;left:42px;top:469px;font-size:14px;line-height:14px;color:#222222;font-style:normal;white-space:nowrap;letter-spacing:-0.304px;">Filters</span>
<span id="results" style="position:absolute;left:285px;top:61px;font-size:14px;line-height:14px;color:#333333;font-style:normal;white-space:nowrap;letter-spacing:-0.315px;">Results</span>
<div style="position:absolute;left:286px;top:85px;width:728px;height:797px;overflow:hidden;"><div style="position:absolute;left:-286px;top:-85px;width:1064px;height:889px;"><span id="a_desc4" style="position:absolute;left:540px;top:91px;font-size:12px;line-height:12px;color:#222222;font-style:normal;white-space:nowrap;letter-spacing:0.039px;">window shows how much ink remains.</span>
<span id="a_usd" style="position:absolute;left:540px;top:127px;font-size:12px;line-height:12px;color:#222222;font-style:normal;white-space:nowrap;letter-spacing:-0.817px;">USD 1.59 EA</span>
<span id="a_bic" style="position:absolute;left:540px;top:227px;font-size:12px;line-height:12px;color:#0d63a3;font-style:normal;white-space:nowrap;letter-spacing:-0.682px;">BIC30924</span>
<span id="a_sup" style="position:absolute;left:704px;top:163px;font-size:12px;line-height:12px;color:#222222;font-style:normal;white-space:nowrap;letter-spacing:-0.167px;">Supplier :</span>
<span id="a_supv" style="position:absolute;left:756px;top:163px;font-size:12px;line-height:12px;color:#0d63a3;font-style:normal;white-space:nowrap;letter-spacing:-0.168px;">Corporate Express Office Supply</span>
<span id="a_spn" style="position:absolute;left:540px;top:199px;font-size:12px;line-height:12px;color:#222222;font-style:normal;white-space:nowrap;letter-spacing:-0.079px;">Supplier Part Number :</span>
<span id="a_sloc" style="position:absolute;left:704px;top:213px;font-size:12px;line-height:12px;color:#222222;font-style:normal;white-space:nowrap;letter-spacing:-0.089px;">Supplier Location :</span>
<span id="a_slocv" style="position:absolute;left:804px;top:213px;font-size:12px;line-height:12px;color:#0d63a3;font-style:normal;white-space:nowrap;letter-spacing:-1.405px;">CEOS</span>
<span id="a_iin" style="position:absolute;left:540px;top:263px;font-size:12px;line-height:12px;color:#222222;font-style:normal;white-space:nowrap;letter-spacing:0.048px;">Internal Item Number :</span>
<span id="a_scon" style="position:absolute;left:704px;top:263px;font-size:12px;line-height:12px;color:#222222;font-style:normal;white-space:nowrap;letter-spacing:-0.061px;">Supplier Contract :</span>
<span id="a_sconv" style="position:absolute;left:805px;top:263px;font-size:12px;line-height:12px;color:#0d63a3;font-style:normal;white-space:nowrap;letter-spacing:-0.180px;">Agreement 5439</span>
<span id="a_ctype" style="position:absolute;left:704px;top:299px;font-size:12px;line-height:12px;color:#222222;font-style:normal;white-space:nowrap;letter-spacing:-0.096px;">Content Type :</span>
<span id="a_ctypev" style="position:absolute;left:783px;top:299px;font-size:12px;line-height:12px;color:#0d63a3;font-style:normal;white-space:nowrap;">This item has pre-negotiated pricing</span>
<span id="a_irat" style="position:absolute;left:540px;top:335px;font-size:12px;line-height:12px;color:#222222;font-style:normal;white-space:nowrap;letter-spacing:-0.111px;">Item Rating :</span>
<span id="a_srat" style="position:absolute;left:704px;top:345px;font-size:12px;line-height:12px;color:#222222;font-style:normal;white-space:nowrap;letter-spacing:-0.189px;">Supplier Rating :</span>
<span id="b_title" style="position:absolute;left:540px;top:429px;font-size:12px;line-height:12px;color:#0d63a3;font-style:normal;white-space:nowrap;letter-spacing:-0.457px;">Great Erase, Black Barrel</span>
<span id="b_qty" style="position:absolute;left:855px;top:413px;font-size:12px;line-height:12px;color:#222222;font-style:normal;white-space:nowrap;letter-spacing:0.159px;">Quantity:</span>
<span id="b_d1" style="position:absolute;left:540px;top:481px;font-size:12px;line-height:12px;color:#222222;font-style:normal;white-space:nowrap;letter-spacing:-0.015px;">Refillable mechanical pencil with a jumbo eraser that advances with a twist for</span>
<span id="b_d2" style="position:absolute;left:540px;top:509px;font-size:12px;line-height:12px;color:#222222;font-style:normal;white-space:nowrap;letter-spacing:-0.117px;">completely clean erasing. The slide sleeve and shock absorbing tip reduce lead</span>
<span id="b_d3" style="position:absolute;left:540px;top:537px;font-size:12px;line-height:12px;color:#222222;font-style:normal;white-space:nowrap;letter-spacing:-0.081px;">breakage by yielding to writing pressure. Jumbo eraser advances with a twist that</span>
<span id="b_d4" style="position:absolute;left:540px;top:565px;font-size:12px;line-height:12px;color:#222222;font-style:normal;white-space:nowrap;letter-spacing:-0.490px;">erases clean.</span>
<span id="b_usd" style="position:absolute;left:540px;top:601px;font-size:12px;line-height:12px;color:#222222;font-style:normal;white-space:nowrap;letter-spacing:-0.908px;">USD 1.19 EA</span>
<span id="b_bic" style="position:absolute;left:540px;top:701px;font-size:12px;line-height:12px;color:#0d63a3;font-style:normal;white-space:nowrap;letter-spacing:-0.682px;">BIC40207</span>
<span id="b_sup" style="position:absolute;left:704px;top:637px;font-size:12px;line-height:12px;color:#222222;font-style:normal;white-space:nowrap;letter-spacing:-0.167px;">Supplier :</span>
<span id="b_supv" style="position:absolute;left:756px;top:637px;font-size:12px;line-height:12px;color:#0d63a3;font-style:normal;white-space:nowrap;letter-spacing:-0.168px;">Corporate Express Office Supply</span>
<span id="b_spn" style="position:absolute;left:540px;top:673px;font-size:12px;line-height:12px;color:#222222;font-style:normal;white-space:nowrap;letter-spacing:-0.079px;">Supplier Part Number :</span>
<span id="b_sloc" style="position:absolute;left:704px;top:687px;font-size:12px;line-height:12px;color:#222222;font-style:normal;white-space:nowrap;letter-spacing:-0.089px;">Supplier Location :</span>
<span id="b_slocv" style="position:absolute;left:804px;top:687px;font-size:12px;line-height:12px;color:#0d63a3;font-style:normal;white-space:nowrap;letter-spacing:-1.405px;">CEOS</span>
<span id="b_iin" style="position:absolute;left:540px;top:737px;font-size:12px;line-height:12px;color:#222222;font-style:normal;white-space:nowrap;letter-spacing:0.048px;">Internal Item Number :</span>
<span id="b_scon" style="position:absolute;left:704px;top:737px;font-size:12px;line-height:12px;color:#222222;font-style:normal;white-space:nowrap;letter-spacing:-0.061px;">Supplier Contract :</span>
<span id="b_sconv" style="position:absolute;left:805px;top:737px;font-size:12px;line-height:12px;color:#0d63a3;font-style:normal;white-space:nowrap;letter-spacing:-0.180px;">Agreement 5439</span>
<span id="b_ctype" style="position:absolute;left:704px;top:773px;font-size:12px;line-height:12px;color:#222222;font-style:normal;white-space:nowrap;letter-spacing:-0.096px;">Content Type :</span>
<span id="b_ctypev" style="position:absolute;left:783px;top:773px;font-size:12px;line-height:12px;color:#0d63a3;font-style:normal;white-space:nowrap;">This item has pre-negotiated pricing</span>
<span id="b_irat" style="position:absolute;left:540px;top:809px;font-size:12px;line-height:12px;color:#222222;font-style:normal;white-space:nowrap;letter-spacing:-0.111px;">Item Rating :</span>
<span id="b_srat" style="position:absolute;left:704px;top:819px;font-size:12px;line-height:12px;color:#222222;font-style:normal;white-space:nowrap;letter-spacing:-0.189px;">Supplier Rating :</span>
<span id="b_one" style="position:absolute;left:913px;top:416px;font-size:12px;line-height:12px;color:#222222;font-style:normal;white-space:nowrap;letter-spacing:-0.087px;">1</span></div></div>
</body></html>
